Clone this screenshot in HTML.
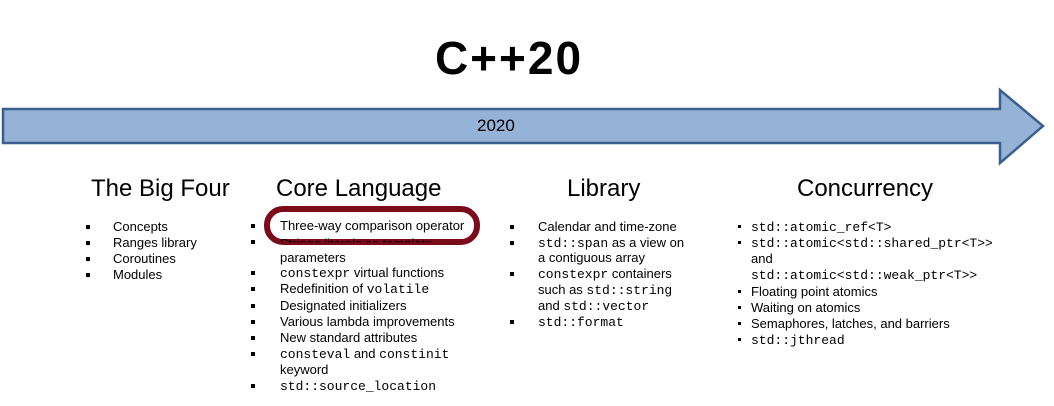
<!DOCTYPE html>
<html><head><style>
body{margin:0;width:1054px;height:406px;background:#fff;position:relative;overflow:hidden;font-family:"Liberation Sans",sans-serif;color:#000}
.a{position:absolute;white-space:nowrap;font-size:13px;line-height:16px}
.h{position:absolute;white-space:nowrap;font-size:24px;line-height:26px}
.b{position:absolute;width:4px;height:4px;background:#000}
code{font-family:"Liberation Mono",monospace;font-size:13px}
</style></head><body>
<div style="position:absolute;left:0;width:1018px;top:33px;text-align:center;font-weight:bold;font-size:46px;line-height:50px;letter-spacing:2px">C++20</div>
<svg width="1054" height="406" style="position:absolute;left:0;top:0">
<polygon points="3,109 1000,109 1000,90 1043,126 1000,163 1000,143 3,143" fill="#95b3d7" stroke="#3a5f8f" stroke-width="2.5"/>
<rect x="267" y="209" width="210" height="33" rx="16" fill="none" stroke="#7b0a1a" stroke-width="6"/>
</svg>
<div class="a" style="left:477px;top:116px;font-size:17px;line-height:20px">2020</div>

<div class="h" style="left:91px;top:176px">The Big Four</div>
<div class="h" style="left:276px;top:176px">Core Language</div>
<div class="h" style="left:567px;top:176px">Library</div>
<div class="h" style="left:797px;top:176px">Concurrency</div>

<div class="b" style="left:86px;top:225px"></div><div class="a" style="left:113px;top:219px">Concepts</div>
<div class="b" style="left:86px;top:241px"></div><div class="a" style="left:113px;top:235px">Ranges library</div>
<div class="b" style="left:86px;top:257px"></div><div class="a" style="left:113px;top:251px">Coroutines</div>
<div class="b" style="left:86px;top:273px"></div><div class="a" style="left:113px;top:267px">Modules</div>

<div class="b" style="left:251px;top:224px"></div><div class="a" style="left:280px;top:218px">Three-way comparison operator</div>
<div class="b" style="left:251px;top:240px"></div><div class="a" style="left:280px;top:236px;clip-path:inset(0 0 60% 0)">Strings literals as template</div>
<div class="a" style="left:280px;top:250px">parameters</div>
<div class="b" style="left:251px;top:271px"></div><div class="a" style="left:280px;top:265px"><code>constexpr</code> virtual functions</div>
<div class="b" style="left:251px;top:287px"></div><div class="a" style="left:280px;top:281px">Redefinition of <code>volatile</code></div>
<div class="b" style="left:251px;top:304px"></div><div class="a" style="left:280px;top:298px">Designated initializers</div>
<div class="b" style="left:251px;top:320px"></div><div class="a" style="left:280px;top:314px">Various lambda improvements</div>
<div class="b" style="left:251px;top:336px"></div><div class="a" style="left:280px;top:330px">New standard attributes</div>
<div class="b" style="left:251px;top:352px"></div><div class="a" style="left:280px;top:346px"><code>consteval</code> and <code>constinit</code></div>
<div class="a" style="left:280px;top:362px">keyword</div>
<div class="b" style="left:251px;top:384px"></div><div class="a" style="left:280px;top:378px"><code>std::source_location</code></div>

<div class="b" style="left:510px;top:225px"></div><div class="a" style="left:538px;top:219px">Calendar and time-zone</div>
<div class="b" style="left:510px;top:241px"></div><div class="a" style="left:538px;top:235px"><code>std::span</code> as a view on</div>
<div class="a" style="left:538px;top:250px">a contiguous array</div>
<div class="b" style="left:510px;top:272px"></div><div class="a" style="left:538px;top:266px"><code>constexpr</code> containers</div>
<div class="a" style="left:538px;top:282px">such as <code>std::string</code></div>
<div class="a" style="left:538px;top:298px">and <code>std::vector</code></div>
<div class="b" style="left:510px;top:320px"></div><div class="a" style="left:538px;top:314px"><code>std::format</code></div>

<div class="b" style="left:738px;top:225px;width:3px;height:3px"></div><div class="a" style="left:751px;top:219px"><code>std::atomic_ref&lt;T&gt;</code></div>
<div class="b" style="left:738px;top:241px;width:3px;height:3px"></div><div class="a" style="left:751px;top:235px"><code>std::atomic&lt;std::shared_ptr&lt;T&gt;&gt;</code></div>
<div class="a" style="left:751px;top:251px">and</div>
<div class="a" style="left:751px;top:267px"><code>std::atomic&lt;std::weak_ptr&lt;T&gt;&gt;</code></div>
<div class="b" style="left:738px;top:290px;width:3px;height:3px"></div><div class="a" style="left:751px;top:284px">Floating point atomics</div>
<div class="b" style="left:738px;top:306px;width:3px;height:3px"></div><div class="a" style="left:751px;top:300px">Waiting on atomics</div>
<div class="b" style="left:738px;top:322px;width:3px;height:3px"></div><div class="a" style="left:751px;top:316px">Semaphores, latches, and barriers</div>
<div class="b" style="left:738px;top:338px;width:3px;height:3px"></div><div class="a" style="left:751px;top:332px"><code>std::jthread</code></div>
</body></html>
